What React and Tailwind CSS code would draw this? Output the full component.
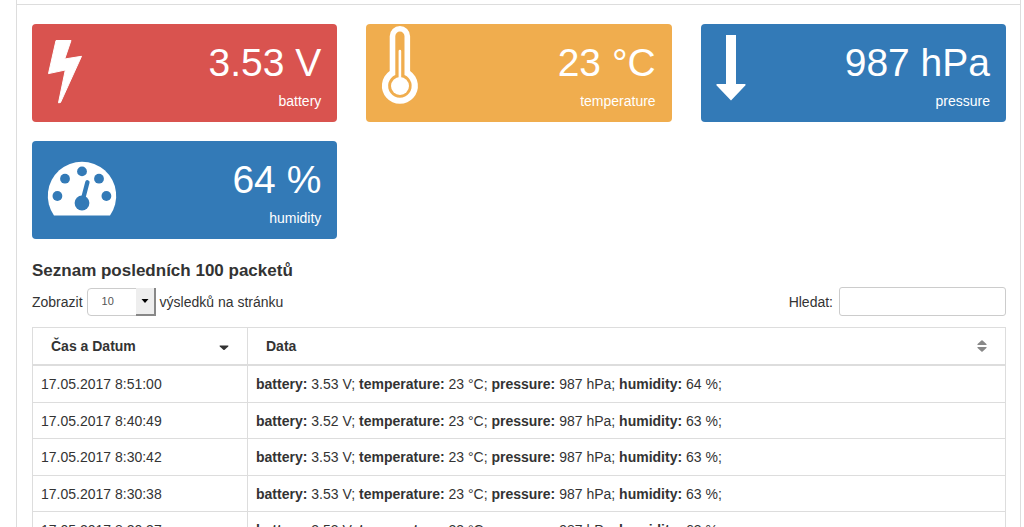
import { useState } from 'react';
import clsx from 'clsx';

const sensors = [
  { label: 'battery', value: '3.53 V', color: 'bg-[#d9534f]', Icon: BoltIcon },
  { label: 'temperature', value: '23 °C', color: 'bg-[#f0ad4e]', Icon: ThermometerIcon },
  { label: 'pressure', value: '987 hPa', color: 'bg-[#337ab7]', Icon: ArrowIcon },
  { label: 'humidity', value: '64 %', color: 'bg-[#337ab7]', Icon: GaugeIcon },
];

const packets = [
  { time: '17.05.2017 8:51:00', battery: '3.53 V', temperature: '23 °C', pressure: '987 hPa', humidity: '64 %' },
  { time: '17.05.2017 8:40:49', battery: '3.52 V', temperature: '23 °C', pressure: '987 hPa', humidity: '63 %' },
  { time: '17.05.2017 8:30:42', battery: '3.53 V', temperature: '23 °C', pressure: '987 hPa', humidity: '63 %' },
  { time: '17.05.2017 8:30:38', battery: '3.53 V', temperature: '23 °C', pressure: '987 hPa', humidity: '63 %' },
  { time: '17.05.2017 8:20:37', battery: '3.53 V', temperature: '23 °C', pressure: '987 hPa', humidity: '63 %' },
];

const fields = ['battery', 'temperature', 'pressure', 'humidity'];

function BoltIcon() {
  return (
    <path
      d="M8 16.5H23L16.7 35 33.5 32.3 12.5 78.5 10.5 78.8 17.3 46 .5 49.6Z"
      stroke="currentColor"
      strokeWidth="1"
      strokeLinejoin="round"
    />
  );
}

function ThermometerIcon() {
  return (
    <>
      <path
        fillRule="evenodd"
        d="M7.7 12.2a10.2 10.2 0 0 1 20.4 0V47a18 18 0 1 1-20.4 0ZM13.3 12.2a4.6 4.6 0 0 1 9.2 0V51a11.8 11.8 0 1 1-9.2 0Z"
      />
      <circle cx="18" cy="62" r="9" />
      <path d="M16.6 27a1.3 1.3 0 0 1 2.6 0V55H16.6Z" />
    </>
  );
}

function ArrowIcon() {
  return <path d="M9 11h10v49h9q1 .3.5 1.2L14 76.5-.6 61.2Q-1 60.3 0 60h9Z" />;
}

function GaugeIcon() {
  return (
    <>
      <path d="M6 74.5A34.2 34.2 0 1 1 62 74.5Z" />
      <g className="text-[#337ab7]" fill="currentColor">
        <circle cx="9.4" cy="55" r="4.9" />
        <circle cx="17" cy="37.7" r="4.9" />
        <circle cx="34" cy="30.4" r="4.9" />
        <circle cx="51" cy="37.7" r="4.9" />
        <circle cx="58.4" cy="55" r="4.9" />
        <circle cx="34" cy="62" r="7.4" />
        <path d="M34.5 60 39.4 41.3" stroke="currentColor" strokeWidth="4.4" strokeLinecap="round" />
      </g>
    </>
  );
}

function SensorCard({ label, value, color, Icon }) {
  return (
    <div className={clsx('flex justify-between rounded px-4 text-white', color)}>
      <svg viewBox="0 0 70 98" className="h-[98px] w-[70px] overflow-visible" fill="currentColor" aria-hidden="true">
        <Icon />
      </svg>
      <div className="pt-[15px] text-right">
        <div className="text-[39px] leading-[47px]">{value}</div>
        <div className="leading-[30px]">{label}</div>
      </div>
    </div>
  );
}

function TableControls() {
  const [pageSize, setPageSize] = useState('10');
  const [search, setSearch] = useState('');

  return (
    <div className="flex items-center justify-between">
      <div className="flex items-center gap-1">
        <label htmlFor="page-size">Zobrazit</label>
        <div className="relative">
          <select
            id="page-size"
            value={pageSize}
            onChange={(e) => setPageSize(e.target.value)}
            className="block h-7 w-[69px] appearance-none rounded-sm border border-[#ccc] bg-white pl-3.5 text-[11px] text-[#555]"
          >
            <option>10</option>
            <option>25</option>
            <option>50</option>
            <option>100</option>
          </select>
          <span className="pointer-events-none absolute inset-y-0 right-0 flex w-5 items-center justify-center border-r-2 border-b-2 border-[#888] bg-[#eee]">
            <svg viewBox="0 0 8 4" className="h-1 w-2" aria-hidden="true">
              <path d="M.5 0h7L4 4Z" fill="#000" />
            </svg>
          </span>
        </div>
        <label htmlFor="page-size">výsledků na stránku</label>
      </div>
      <div className="flex items-center gap-1.5">
        <label htmlFor="search">Hledat:</label>
        <input
          id="search"
          type="search"
          value={search}
          onChange={(e) => setSearch(e.target.value)}
          className="h-[29px] w-[167px] rounded-[3px] border border-[#ccc] px-2.5"
        />
      </div>
    </div>
  );
}

function PacketTable() {
  return (
    <table className="w-full table-fixed border-collapse border border-[#ddd] text-left">
      <thead>
        <tr className="h-[37px] border-b-2 border-[#ddd]">
          <th className="w-[215px] border-r border-[#ddd] px-[18px] font-bold">
            <button type="button" className="flex w-full items-center justify-between">
              Čas a Datum
              <svg viewBox="0 0 10 10" className="h-2.5 w-2.5" aria-hidden="true">
                <path d="M.8 4.5h8.4q.6.3 0 1L5.7 8.7q-.7.5-1.4 0L.8 5.5q-.6-.7 0-1Z" fill="#333" />
              </svg>
            </button>
          </th>
          <th className="px-[18px] font-bold">
            <button type="button" className="flex w-full items-center justify-between">
              Data
              <svg viewBox="0 0 10 12" className="h-3 w-2.5" aria-hidden="true">
                <path d="M.8 5Q0 4.6.6 4L4.4.4q.6-.5 1.2 0L9.4 4q.6.6-.2 1ZM.8 7Q0 7.4.6 8l3.8 3.6q.6.5 1.2 0L9.4 8q.6-.6-.2-1Z" fill="#888" />
              </svg>
            </button>
          </th>
        </tr>
      </thead>
      <tbody>
        {packets.map((packet) => (
          <tr key={packet.time} className="border-b border-[#ddd] *:p-2 even:*:pb-[7px]">
            <td className="border-r border-[#ddd]">{packet.time}</td>
            <td>
              {fields.map((field) => (
                <span key={field}>
                  <b>{field}:</b> {packet[field]};{' '}
                </span>
              ))}
            </td>
          </tr>
        ))}
      </tbody>
    </table>
  );
}

function App() {
  return (
    <div className="h-screen overflow-hidden bg-white pr-[3px] pl-4 font-['Liberation_Sans',Arial,sans-serif] text-sm text-[#333]">
      <div className="min-h-full border-x border-[#ddd]">
        <div className="h-[5px] border-b border-[#ddd]" />
        <main className="pt-[19px] pr-3.5 pl-[15px]">
          <div className="grid grid-cols-3 gap-x-[29px] gap-y-[19px]">
            {sensors.map((sensor) => (
              <SensorCard key={sensor.label} {...sensor} />
            ))}
          </div>
          <h4 className="mt-[22px] mb-1.5 text-[17px] leading-5 font-bold">Seznam posledních 100 packetů</h4>
          <TableControls />
          <div className="mt-[11px]">
            <PacketTable />
          </div>
        </main>
      </div>
    </div>
  );
}

export default App;
